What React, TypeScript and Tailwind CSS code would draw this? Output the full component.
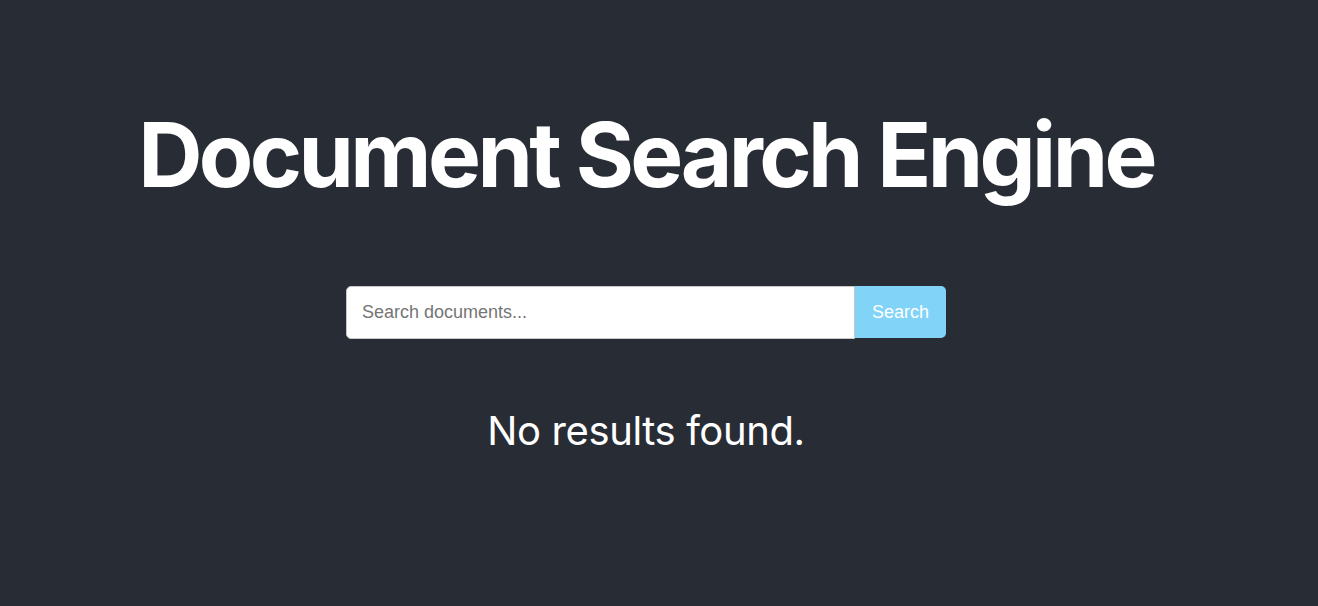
import React from 'react'

function App() {
  return (
    <div className="min-h-screen bg-[#282c34] text-white flex flex-col items-center pr-[26px] pt-[96px]" style={{ fontFamily: 'Inter, "Liberation Sans", sans-serif' }}>
      <h1 className="text-[89px] font-bold leading-[118px] tracking-[-3.6px]">Document Search Engine</h1>
      <form className="flex mt-[72px]" onSubmit={(e) => e.preventDefault()}>
        <input
          type="text"
          placeholder="Search documents..."
          className="w-[509px] h-[53px] px-[15px] bg-white text-black text-[18px] rounded-l-[5px] border border-[#c8c8c8] outline-none placeholder:text-[#757575]"
          style={{ fontFamily: '"Liberation Sans", Arial, sans-serif' }}
        />
        <button
          type="submit"
          className="w-[91px] h-[52px] bg-[#81d4f7] text-white text-[18px] rounded-r-[5px]"
          style={{ fontFamily: '"Liberation Sans", Arial, sans-serif' }}
        >
          Search
        </button>
      </form>
      <p className="mt-[64px] text-[40px] leading-[56px] tracking-[-0.4px]">No results found.</p>
    </div>
  )
}

export default App
